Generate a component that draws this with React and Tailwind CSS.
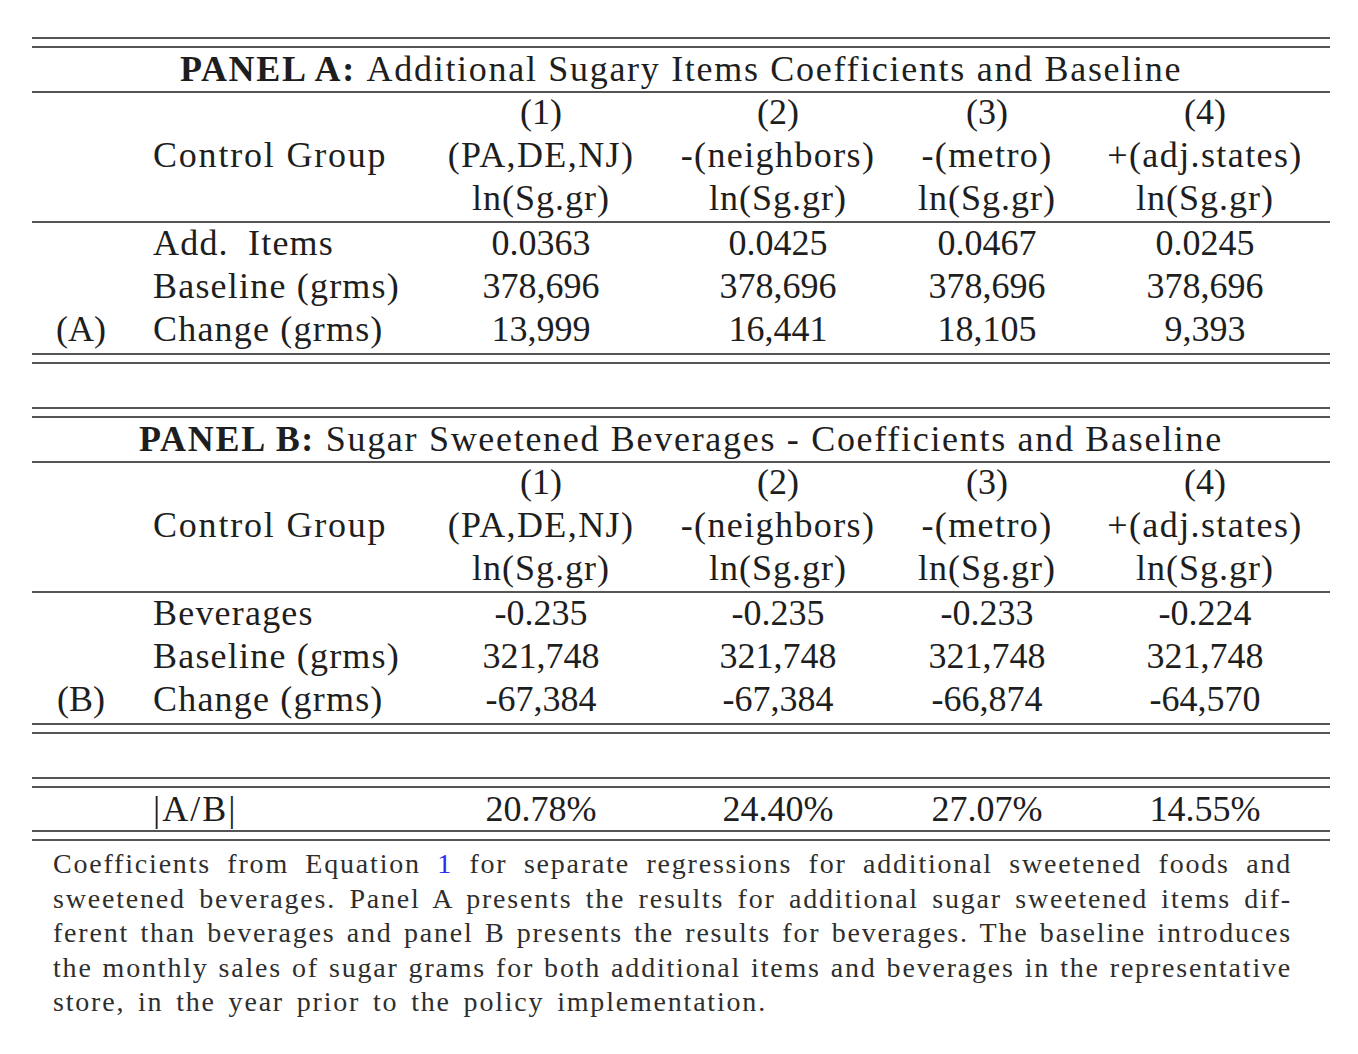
import React from 'react'

const cols = 'grid grid-cols-[98px_290px_242px_232px_186px_250px] items-center'

const headers = [
    ['(1)', '(PA,DE,NJ)'],
    ['(2)', '-(neighbors)'],
    ['(3)', '-(metro)'],
    ['(4)', '+(adj.states)'],
]

const panels = [
    {
        tag: 'A',
        title: 'Additional Sugary Items Coefficients and Baseline',
        rows: [
            ['Add.\u2002Items', '0.0363', '0.0425', '0.0467', '0.0245'],
            ['Baseline (grms)', '378,696', '378,696', '378,696', '378,696'],
            ['Change (grms)', '13,999', '16,441', '18,105', '9,393'],
        ],
    },
    {
        tag: 'B',
        title: 'Sugar Sweetened Beverages - Coefficients and Baseline',
        rows: [
            ['Beverages', '-0.235', '-0.235', '-0.233', '-0.224'],
            ['Baseline (grms)', '321,748', '321,748', '321,748', '321,748'],
            ['Change (grms)', '-67,384', '-67,384', '-66,874', '-64,570'],
        ],
    },
]

const Rule = () => <div className="h-[2px] bg-[#555]" />

const DoubleRule = () => (
    <div className="flex flex-col gap-[7px]">
        <Rule />
        <Rule />
    </div>
)

function Panel({ panel }) {
    return (
        <div>
            <DoubleRule />
            <div className="h-[43px] flex items-center justify-center tracking-[1.7px]">
                <span className="font-bold">PANEL {panel.tag}:</span>
                <span>&nbsp;{panel.title}</span>
            </div>
            <Rule />
            <div className="pb-[1px]">
                <div className={`${cols} h-[43px] -mt-[2px]`}>
                    <div />
                    <div />
                    {headers.map((h, i) => <div key={i} className="text-center">{h[0]}</div>)}
                </div>
                <div className={`${cols} h-[43px]`}>
                    <div />
                    <div className="pl-[23px] tracking-[1.8px]">Control Group</div>
                    {headers.map((h, i) => <div key={i} className="text-center tracking-[1.4px]">{h[1]}</div>)}
                </div>
                <div className={`${cols} h-[43px]`}>
                    <div />
                    <div />
                    {headers.map((h, i) => <div key={i} className="text-center tracking-[1px]">ln(Sg.gr)</div>)}
                </div>
            </div>
            <Rule />
            <div className="pb-[2px]">
                {panel.rows.map((row, r) => (
                    <div key={r} className={`${cols} h-[43px] ${r === 0 ? '-mt-[1px]' : ''}`}>
                        <div className="text-center">{r === 2 ? `(${panel.tag})` : ''}</div>
                        <div className="pl-[23px] tracking-[1.2px]">{row[0]}</div>
                        {row.slice(1).map((v, i) => <div key={i} className="text-center">{v}</div>)}
                    </div>
                ))}
            </div>
            <DoubleRule />
        </div>
    )
}

const captionLines = [
    <>Coefficients from Equation <span className="text-[#2a2af0]">1</span> for separate regressions for additional sweetened foods and</>,
    <>sweetened beverages. Panel A presents the results for additional sugar sweetened items dif-</>,
    <>ferent than beverages and panel B presents the results for beverages. The baseline introduces</>,
    <>the monthly sales of sugar grams for both additional items and beverages in the representative</>,
]

export default function App() {
    return (
        <div className="w-[1358px] h-[1054px] bg-white text-[#1e1e1e] font-['Liberation_Serif'] text-[36px] leading-[43px]">
            <div className="pt-[37px] pl-[32px] w-[1330px]">
                <Panel panel={panels[0]} />
                <div className="h-[43px]" />
                <Panel panel={panels[1]} />
                <div className="h-[43px]" />
                <DoubleRule />
                <div className={`${cols} h-[42px]`}>
                    <div />
                    <div className="pl-[23px] tracking-[2px]">|A/B|</div>
                    <div className="text-center">20.78%</div>
                    <div className="text-center">24.40%</div>
                    <div className="text-center">27.07%</div>
                    <div className="text-center">14.55%</div>
                </div>
                <DoubleRule />
            </div>
            <div className="mt-[6px] ml-[53px] w-[1239px] text-[28px] leading-[34.5px] tracking-[1.8px] text-[#2e2e2e]">
                {captionLines.map((l, i) => (
                    <div key={i} className="whitespace-nowrap text-justify [text-align-last:justify]">{l}</div>
                ))}
                <div className="[word-spacing:4px]">store, in the year prior to the policy implementation.</div>
            </div>
        </div>
    )
}
